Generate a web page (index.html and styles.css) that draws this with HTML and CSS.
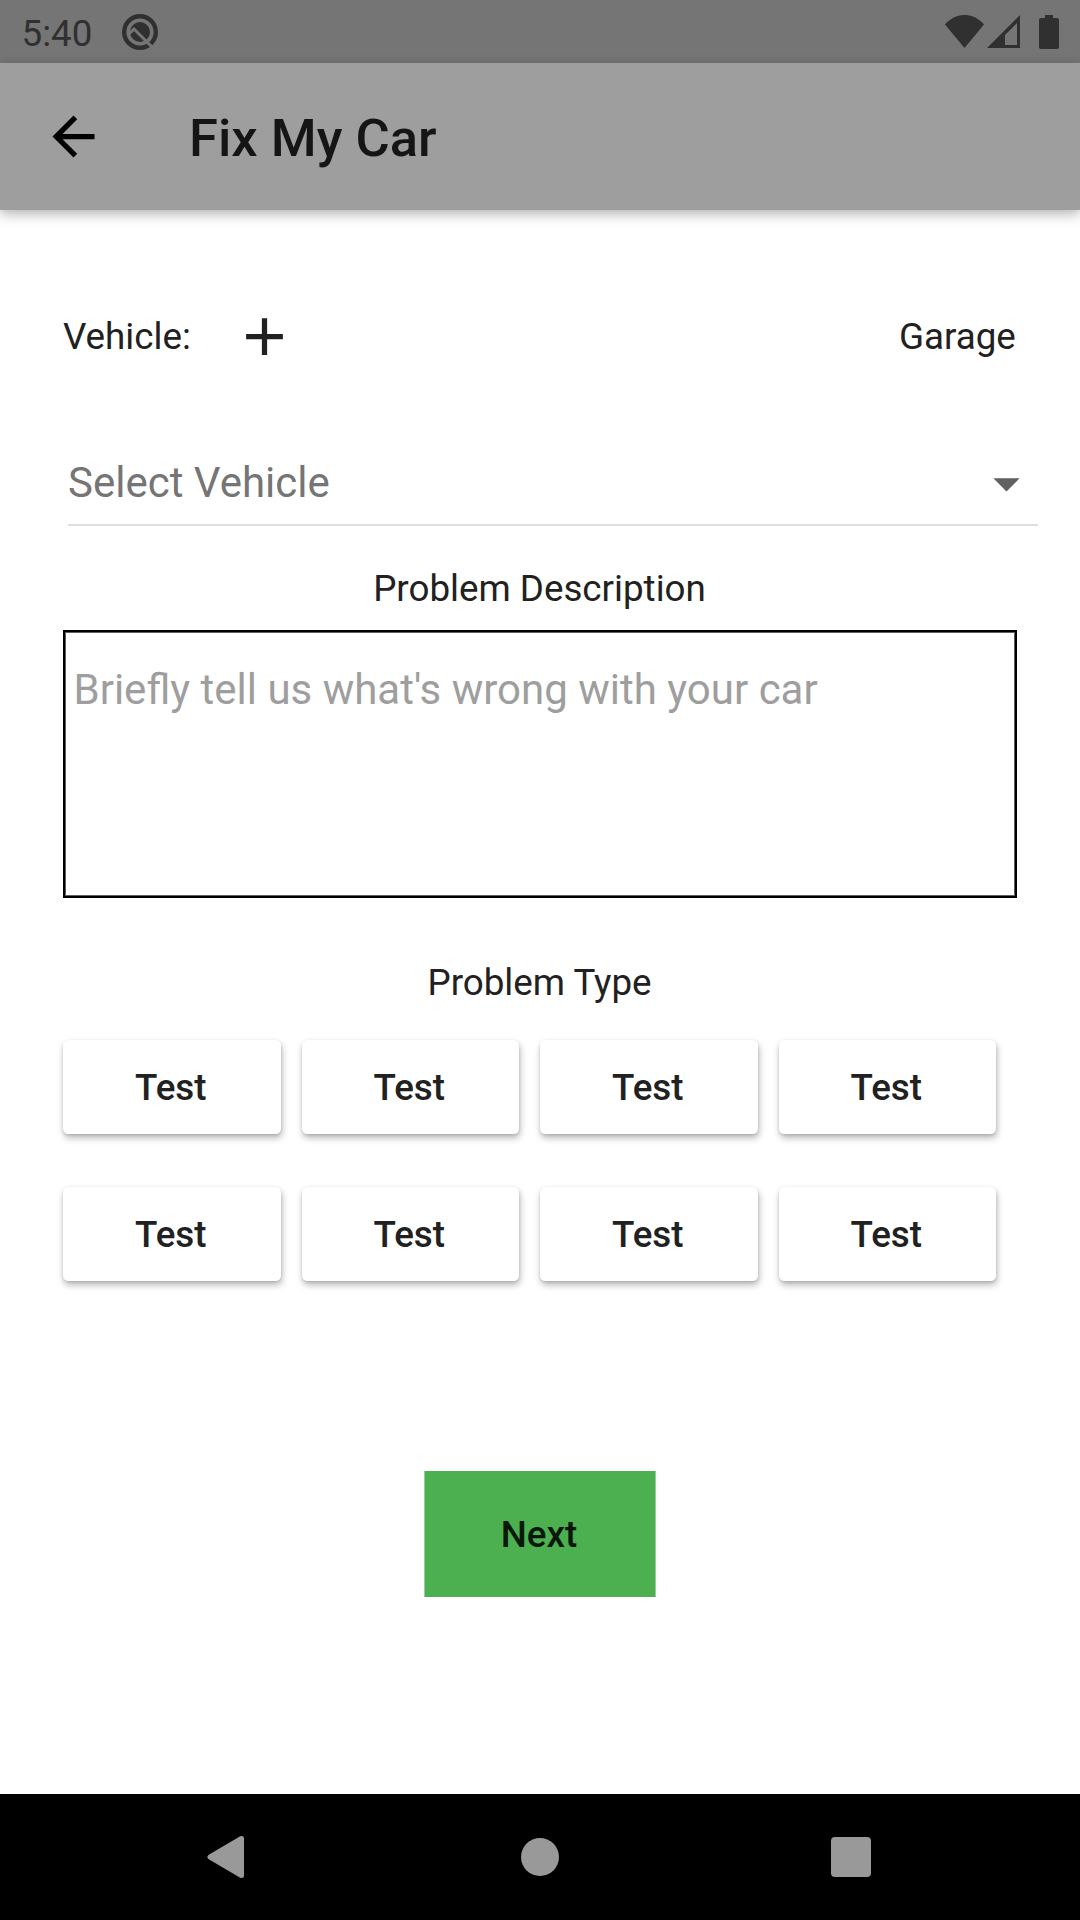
FILE: index.html
```html
<!DOCTYPE html>
<html lang="en">
<head>
<meta charset="utf-8">
<title>Fix My Car</title>
<link rel="stylesheet" href="styles.css">
</head>
<body>
<div class="screen">
  <div class="status">
    <span class="clock">5:40</span>
    <svg class="status-logo" width="38" height="38" viewBox="0 0 38 38">
      <circle cx="19" cy="19" r="15.800" fill="none" stroke="#303030" stroke-width="4.400"/>
      <circle cx="19" cy="19" r="10" fill="#303030"/>
      <path d="M8.500 20.500L13 16l18.500 18.500" fill="none" stroke="#757575" stroke-width="3"/>
    </svg>
    <div class="indicators">
      <svg width="39" height="33" viewBox="0 0 39 33"><path d="M0 9.500C11-3.200 28-3.200 39 9.500L19.500 33z" fill="#303030"/></svg>
      <svg class="signal" width="33" height="33" viewBox="0 0 33 33"><path d="M33 0v33H0zM30 8L18 20v10h12z" fill="#303030" fill-rule="evenodd"/></svg>
      <svg class="battery" width="20" height="34" viewBox="0 0 20 34"><path d="M6 0h8v3h4a2 2 0 0 1 2 2v27a2 2 0 0 1-2 2H2a2 2 0 0 1-2-2V5a2 2 0 0 1 2-2h4z" fill="#303030"/></svg>
    </div>
  </div>
  <header class="appbar">
    <svg class="icon" viewBox="0 0 24 24"><path d="M20 11H7.830l5.590-5.590L12 4l-8 8 8 8 1.410-1.410L7.830 13H20z" fill="#000"/></svg>
    <h1 class="title">Fix My Car</h1>
  </header>
  <main class="content">
    <div class="vehicle-row">
      <span class="vehicle">Vehicle:</span>
      <svg class="icon" viewBox="0 0 24 24"><path d="M19 13h-6v6h-2v-6H5v-2h6V5h2v6h6z" fill="#212121"/></svg>
      <span class="garage">Garage</span>
    </div>
    <div class="select">
      <span>Select Vehicle</span>
      <svg class="icon arrow" viewBox="0 0 24 24"><path d="M7 10l5 5 5-5z" fill="#616161"/></svg>
    </div>
    <h2 class="label">Problem Description</h2>
    <div class="description">Briefly tell us what's wrong with your car</div>
    <h2 class="label type-label">Problem Type</h2>
    <div class="types">
      <button class="type">Test</button>
      <button class="type">Test</button>
      <button class="type">Test</button>
      <button class="type">Test</button>
      <button class="type">Test</button>
      <button class="type">Test</button>
      <button class="type">Test</button>
      <button class="type">Test</button>
    </div>
    <button class="next">Next</button>
  </main>
  <nav class="navbar">
    <svg width="38" height="42" viewBox="0 0 38 42"><path d="M3 21L34.500 2.500v37z" fill="#999" stroke="#999" stroke-width="5" stroke-linejoin="round"/></svg>
    <svg width="38" height="38" viewBox="0 0 38 38"><circle cx="19" cy="19" r="19" fill="#999"/></svg>
    <svg width="40" height="40" viewBox="0 0 40 40"><rect width="40" height="40" rx="4" fill="#999"/></svg>
  </nav>
</div>
</body>
</html>
```
FILE: styles.css
```css
* { box-sizing: border-box; }
body { margin: 0; background: #fff; font-family: Roboto, sans-serif; color: #212121; }
svg { display: block; flex: none; }
h1, h2 { margin: 0; }
button { border: 0; padding: 0; font: 500 36.75px/44px Roboto, sans-serif; color: #212121; }
.screen { width: 1080px; height: 1920px; display: flex; flex-direction: column; overflow: hidden; }
.icon { width: 63px; height: 63px; }

.status { height: 63px; flex: none; background: #757575; display: flex; align-items: center; padding: 0 21px 0 21.5px; }
.clock { width: 99.5px; font-size: 36.75px; line-height: 44px; color: #303030; padding-top: 4px; }
.indicators { margin-left: auto; display: flex; align-items: center; }
.signal { margin-left: 3px; }
.battery { margin-left: 19px; }

.appbar { height: 147px; flex: none; background: #9e9e9e; display: flex; align-items: center; padding-left: 42px; box-shadow: 0 4px 12px rgba(0, 0, 0, .3); }
.title { margin-left: 84px; padding-top: 3px; font-size: 52.5px; font-weight: 500; line-height: 62px; color: #151515; }

.content { flex: 1; padding: 95px 63px 0; display: flex; flex-direction: column; }
.vehicle-row { height: 63px; display: flex; align-items: center; font-size: 36.75px; }
.vehicle { margin-right: 42.6px; }
.garage { margin: 0 1.2px 0 auto; }
.select { margin: 83px -21px 0 5px; height: 75px; border-bottom: 2px solid #dedede; display: flex; justify-content: space-between; font-size: 42px; line-height: 63px; color: #757575; }
.arrow { margin-top: 1px; }
.label { margin-top: 41px; padding-right: 1px; text-align: center; font-size: 36.75px; font-weight: 400; line-height: 44px; }
.description { margin-top: 19px; height: 268px; flex: none; border: 2px solid #000; box-shadow: inset 0 0 0 1px #5f5f5f; padding: 33px 8.5px; font-size: 42px; line-height: 50px; color: #9e9e9e; }
.type-label { margin-top: 63px; }
.types { margin: 34.5px 21px 0 0; display: grid; grid-template-columns: repeat(4, 217.5px); justify-content: space-between; row-gap: 52.5px; }
.type { height: 94.5px; padding: 3px 2px 0 0; background: #fff; border-radius: 5.25px; box-shadow: 1px 4px 7px rgba(0, 0, 0, .28), 0 1px 3px rgba(0, 0, 0, .12); }
.next { margin: 189.5px 0 0 361px; width: 232px; height: 126px; padding: 2px 2px 0 0; border: solid #94d096; border-width: 0 1px; background: #4caf50; color: #0a170b; }

.navbar { height: 126px; flex: none; background: #000; display: grid; grid-template-columns: 314px 310px auto; align-items: center; padding-left: 207px; }
```
